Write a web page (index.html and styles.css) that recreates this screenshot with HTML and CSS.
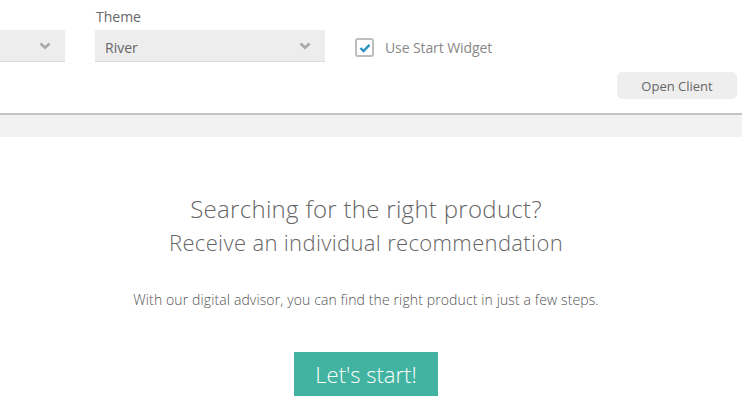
FILE: index.html
```html
<!DOCTYPE html>
<html>

<head>
    <title>Digital Advisor</title>
    <link rel="stylesheet" href="styles.css">
</head>

<body>
    <div class="settings">
        <div class="fields">
            <div class="field">
                <div class="field-label"></div>
                <div class="select">
                    <span></span>
                    <svg class="chevron" width="12" height="8" viewBox="0 0 12 8"><path d="M1.5 1.5 6 5.8 10.5 1.5" fill="none" stroke="#a8a8a8" stroke-width="2.6"/></svg>
                </div>
            </div>
            <div class="field">
                <label class="field-label">Theme</label>
                <div class="select">
                    <span>River</span>
                    <svg class="chevron" width="12" height="8" viewBox="0 0 12 8"><path d="M1.5 1.5 6 5.8 10.5 1.5" fill="none" stroke="#a8a8a8" stroke-width="2.6"/></svg>
                </div>
            </div>
            <label class="check">
                <span class="box">
                    <svg width="12" height="10" viewBox="0 0 12 10"><path d="M1.5 5 4.5 8 10.5 1.8" fill="none" stroke="#2a8fc1" stroke-width="2.4"/></svg>
                </span>
                Use Start Widget
            </label>
        </div>
        <div class="actions">
            <button class="open-client">Open Client</button>
        </div>
    </div>
    <div class="band"></div>

    <div class="intro">
        <h1>Searching for the right product?</h1>
        <h2>Receive an individual recommendation</h2>
        <p>With our digital advisor, you can find the right product in just a few steps.</p>
        <button class="start">Let's start!</button>
    </div>
</body>

</html>
```

FILE: styles.css
```css
body {
    margin: 0;
    font-family: "Open Sans", sans-serif;
    background-color: #ffffff;
    overflow: hidden;
}

.settings {
    height: 115px;
    border-bottom: 2px solid #c4c4c4;
    box-sizing: border-box;
}

.fields {
    display: flex;
    align-items: flex-end;
    gap: 30px;
    margin-left: -165px;
    padding-top: 7px;
}

.field {
    width: 230px;
}

.field-label {
    display: block;
    font-size: 14px;
    color: #666;
    margin-left: 1px;
    height: 23px;
}

.select {
    height: 32px;
    background-color: #ededed;
    border-bottom: 1px solid #dcdcdc;
    display: flex;
    align-items: center;
    justify-content: space-between;
    padding: 0 14px 0 10px;
    font-size: 14px;
    color: #666;
    box-sizing: border-box;
}

.select span {
    padding-top: 3px;
}

.check {
    display: flex;
    align-items: center;
    gap: 11px;
    font-size: 14px;
    color: #888;
    height: 33px;
    margin-bottom: -2px;
    letter-spacing: -0.1px;
}

.box {
    width: 15px;
    height: 15px;
    border: 2px solid #bdbdbd;
    border-radius: 3px;
    display: flex;
    align-items: center;
    justify-content: center;
}

.actions {
    display: flex;
    justify-content: flex-end;
    padding: 10px 5px 0 0;
}

.open-client {
    width: 120px;
    height: 27px;
    border: none;
    border-radius: 5px;
    background-color: #eeeeee;
    color: #666;
    font-family: "Open Sans", sans-serif;
    font-size: 13px;
}

.band {
    height: 22px;
    background-color: #f2f2f2;
}

.intro {
    text-align: center;
    padding-right: 10px;
    font-family: "Open Sans", sans-serif;
    font-weight: 300;
    color: #666;
}

.intro h1 {
    font-size: 24px;
    font-weight: 300;
    letter-spacing: 0.3px;
    margin: 55px 0 0;
}

.intro h2 {
    font-size: 22px;
    font-weight: 300;
    letter-spacing: 0.35px;
    margin: 2px 0 0;
}

.intro p {
    font-size: 14px;
    letter-spacing: 0.12px;
    margin: 33px 0 0;
    color: #555;
}

.start {
    margin-top: 43px;
    width: 144px;
    height: 44px;
    border: none;
    background-color: #41b3a0;
    color: #fff;
    font-family: "Open Sans", sans-serif;
    font-weight: 300;
    font-size: 22px;
}
```
